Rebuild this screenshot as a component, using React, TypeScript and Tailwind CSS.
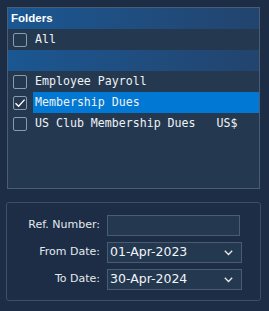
import React from 'react';

const Check: React.FC<{ checked?: boolean }> = ({ checked }) => (
  <span className="flex h-[14px] w-[14px] shrink-0 items-center justify-center rounded-[2px] border border-[#8c9bab] bg-[#243850]">
    {checked && (
      <svg width="12" height="12" viewBox="0 0 12 12" fill="none">
        <path d="M1.5 6.2 L4.6 9.2 L10.6 2.6" stroke="#ffffff" strokeWidth="1.4" />
      </svg>
    )}
  </span>
);

const Row: React.FC<{ label: string; checked?: boolean; selected?: boolean }> = ({ label, checked, selected }) => (
  <div className="flex h-[21px] items-center pl-[5px]">
    <Check checked={checked} />
    <span
      className={`ml-[6px] flex h-full flex-1 items-center whitespace-pre pl-[2px] text-[11.6px] text-[#eef2f6] [font-family:'DejaVu_Sans_Mono',monospace] ${
        selected ? 'bg-[#0078d4]' : ''
      }`}
    >
      {label}
    </span>
  </div>
);

const Chevron = () => (
  <svg width="9" height="6" viewBox="0 0 9 6" fill="none">
    <path d="M0.8 0.8 L4.5 4.5 L8.2 0.8" stroke="#e6ecf2" strokeWidth="1.3" />
  </svg>
);

const FormRow: React.FC<{ label: string; children: React.ReactNode }> = ({ label, children }) => (
  <div className="flex items-center">
    <span className="w-[93px] text-right text-[11px] text-[#e3e9ef]">{label}</span>
    <div className="ml-[7px]">{children}</div>
  </div>
);

const DateSelect: React.FC<{ value: string }> = ({ value }) => (
  <div className="flex h-[21px] w-[135px] items-center justify-between border border-[#4a5c72] bg-[#243850] pl-[2px] pr-[8px]">
    <span className="text-[12.5px] text-[#f2f5f8]">{value}</span>
    <Chevron />
  </div>
);

export default function App() {
  return (
    <div className="h-[311px] w-[269px] bg-[#1c2d45] pl-[6px] pt-[7px] [font-family:'DejaVu_Sans',sans-serif]">
      <div className="ml-px h-[182px] w-[253px] border border-[#4b5d73] bg-[#243850]">
        <div className="flex h-[21px] items-center bg-gradient-to-r from-[#1a5792] to-[#22446e] pl-[3px] text-[11.5px] font-bold text-white [font-family:'Liberation_Sans',sans-serif]">
          Folders
        </div>
        <Row label="All" />
        <div className="h-[21px] bg-gradient-to-r from-[#1a5792] to-[#22446e]" />
        <Row label="Employee Payroll" />
        <Row label="Membership Dues" checked selected />
        <Row label="US Club Membership Dues   US$" />
      </div>
      <div className="mt-[13px] flex h-[99px] w-[255px] flex-col gap-[6px] rounded-[3px] border border-[#3d4f66] pt-[12px]">
        <FormRow label="Ref. Number:">
          <div className="h-[21px] w-[133px] border border-[#4a5c72] bg-[#243850]" />
        </FormRow>
        <FormRow label="From Date:">
          <DateSelect value="01-Apr-2023" />
        </FormRow>
        <FormRow label="To Date:">
          <DateSelect value="30-Apr-2024" />
        </FormRow>
      </div>
    </div>
  );
}
